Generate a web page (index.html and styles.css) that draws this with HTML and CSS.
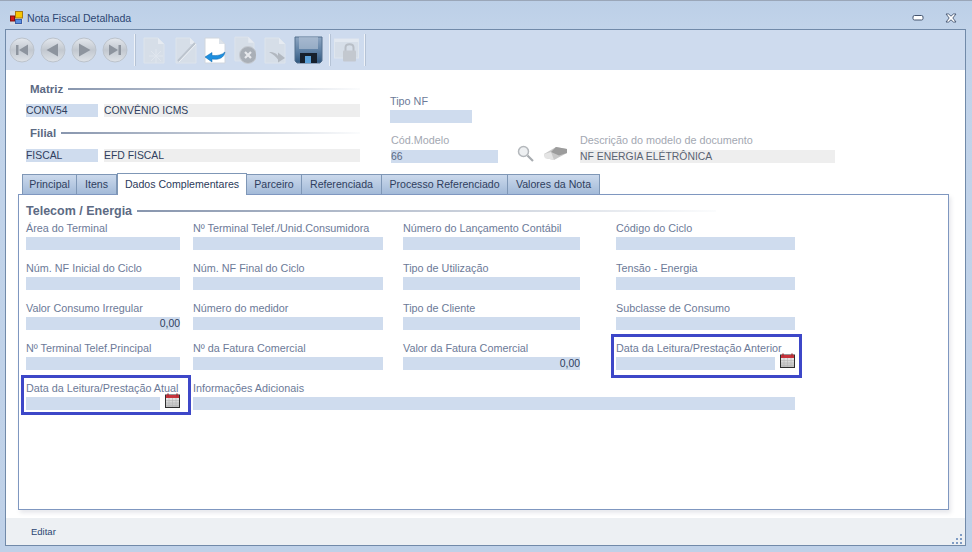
FILE: index.html
```html
<!DOCTYPE html>
<html lang="pt-BR">
<head>
<meta charset="utf-8">
<title>Nota Fiscal Detalhada</title>
<link rel="stylesheet" href="styles.css">
</head>
<body>
<svg class="defs" width="0" height="0" aria-hidden="true">
  <defs>
    <linearGradient id="ball" x1="0" y1="0" x2="0" y2="1"><stop offset="0" stop-color="#e4e8ee"/><stop offset=".5" stop-color="#c2c8d0"/><stop offset="1" stop-color="#dfe3e8"/></linearGradient>
    <linearGradient id="floppy" x1="0" y1="0" x2="0" y2="1"><stop offset="0" stop-color="#8ea6c2"/><stop offset=".55" stop-color="#5d7fa3"/><stop offset="1" stop-color="#2f577f"/></linearGradient>
    <linearGradient id="cal" x1="0" y1="0" x2="0" y2="1"><stop offset="0" stop-color="#f5f5f5"/><stop offset="1" stop-color="#bdbdbd"/></linearGradient>
    <symbol id="doc" viewBox="0 0 22 27">
      <path d="M1 1H15L21 7V26H1Z" fill="#d6dee8" stroke="#dde4ec"/>
      <path d="M15 1V7H21Z" fill="#e6ebf2"/>
    </symbol>
    <symbol id="calendar" viewBox="0 0 15 15">
      <rect x="0.5" y="2" width="14" height="12.5" fill="url(#cal)" stroke="#2e2e2e"/>
      <rect x="1" y="2" width="13" height="3" fill="#c8343c"/>
      <path d="M3 0.5V3.500M12 0.5V3.500" stroke="#a83038" stroke-width="1.4"/>
      <path d="M1 7.500H14M1 10H14M1 12.500H14M4 5V14M7.500 5V14M11 5V14" stroke="#b5b5b5" stroke-width=".6"/>
    </symbol>
  </defs>
</svg>

<div class="window">
  <header class="titlebar">
    <svg class="app-icon" width="13" height="14" viewBox="0 0 13 14">
      <rect x="0" y="0" width="13" height="14" fill="#d3dbe5"/>
      <rect x="5.5" y="0.5" width="7" height="6.5" fill="#f7c600" stroke="#a87a10"/>
      <rect x="0.5" y="5" width="4" height="5" fill="#d81818" stroke="#801010"/>
      <rect x="5.5" y="8.5" width="6" height="4" fill="#5b8fe0" stroke="#3a5ea8"/>
    </svg>
    <span class="title">Nota Fiscal Detalhada</span>
    <div class="win-buttons">
      <svg width="12" height="6" viewBox="0 0 12 6"><rect x="1" y="0.5" width="10" height="4.5" rx="1.5" fill="#fff" stroke="#44546e"/></svg>
      <svg width="12" height="10" viewBox="0 0 12 10"><path d="M1 1H3.6L6 3.2 8.4 1H11L7.8 5 11 9H8.4L6 6.8 3.6 9H1L4.2 5Z" fill="#fff" stroke="#44546e" stroke-width=".9"/></svg>
    </div>
  </header>

  <div class="frame">
    <div class="toolbar">
      <svg class="tool ball" width="26" height="26" viewBox="0 0 26 26"><circle cx="13" cy="13" r="12" fill="url(#ball)" stroke="#bcc3cc"/><path d="M7 8H9.5V18H7ZM19 7.5V18.5L10 13Z" fill="#8d949e"/></svg>
      <svg class="tool ball" width="26" height="26" viewBox="0 0 26 26"><circle cx="13" cy="13" r="12" fill="url(#ball)" stroke="#bcc3cc"/><path d="M18 6.5V19.500L6.500 13Z" fill="#8d949e"/></svg>
      <svg class="tool ball" width="26" height="26" viewBox="0 0 26 26"><circle cx="13" cy="13" r="12" fill="url(#ball)" stroke="#bcc3cc"/><path d="M8 6.500V19.500L19.500 13Z" fill="#8d949e"/></svg>
      <svg class="tool ball" width="26" height="26" viewBox="0 0 26 26"><circle cx="13" cy="13" r="12" fill="url(#ball)" stroke="#bcc3cc"/><path d="M16.500 8H19V18H16.500ZM7 7.500V18.500L16 13Z" fill="#8d949e"/></svg>
      <span class="sep sep-a"></span>
      <svg class="tool doc1" width="22" height="27"><use href="#doc"/><path d="M8 14L18 24M18 14L8 24M13 12V26M6 19H20" stroke="#e0e6ee" stroke-width="1"/></svg>
      <svg class="tool doc2" width="22" height="27"><use href="#doc"/><path d="M3 24L20 6" stroke="#bcc4ce" stroke-width="2"/><path d="M4 25L21 7" stroke="#eef2f6"/></svg>
      <svg class="tool doc3" width="22" height="27" viewBox="0 0 22 27"><path d="M1 1H15L21 7V26H1Z" fill="#fff" stroke="#d0d6de"/><path d="M15 1V7H21Z" fill="#dde3ea"/><path d="M21 15C20 21 15 23 8 22V25L1 20 8 15.500V18.500C13 19 18 18 21 15Z" fill="#1e8fdf" stroke="#1269ad" stroke-width=".5"/></svg>
      <svg class="tool doc4" width="22" height="28" viewBox="0 0 22 28"><use href="#doc" width="21" height="26"/><circle cx="14" cy="19" r="8.500" fill="#a9afb7" stroke="#c6cbd2"/><path d="M11 16L17 22M17 16L11 22" stroke="#e6e8ec" stroke-width="2.200"/></svg>
      <svg class="tool doc5" width="22" height="27"><use href="#doc"/><path d="M5 15C10 15 13 17 14 19V15.500L21 21 14 25.500V22.500C12 20 9 17 5 15Z" fill="#b2b8c0"/></svg>
      <svg class="tool save" width="29" height="28" viewBox="0 0 29 28"><path d="M1 1H28V25L26 27H3L1 25Z" fill="url(#floppy)" stroke="#54708e"/><rect x="5" y="1" width="19" height="12" fill="#b7c7d8" opacity=".6"/><rect x="6" y="17" width="17" height="10" fill="#16202c"/><rect x="11" y="20" width="6" height="7" fill="#5aa0d8"/></svg>
      <span class="sep sep-b"></span>
      <svg class="tool lock" width="25" height="28" viewBox="0 0 25 28"><rect x="0.500" y="3" width="24" height="19" fill="#d6dee8" stroke="#dfe6ee"/><rect x="0.500" y="3" width="24" height="3" fill="#e2e8f0"/><path d="M11.500 15V11.500C11.500 7 19.500 7 19.500 11.500V15" fill="none" stroke="#b8bec6" stroke-width="2"/><rect x="9" y="14.500" width="13" height="11" rx="1" fill="#c3c8cf"/></svg>
      <span class="sep sep-c"></span>
    </div>

    <main class="content">
      <section class="head">
        <div class="head-left">
          <div class="group-title title-matriz"><b>Matriz</b><i></i></div>
          <div class="pair">
            <span class="box code">CONV54</span>
            <span class="box desc">CONVÊNIO ICMS</span>
          </div>
          <div class="group-title title-filial"><b>Filial</b><i></i></div>
          <div class="pair">
            <span class="box code">FISCAL</span>
            <span class="box desc">EFD FISCAL</span>
          </div>
        </div>
        <div class="head-right">
          <div class="tipo">
            <label class="lbl">Tipo NF</label>
            <span class="box tipo-box"></span>
          </div>
          <div class="modelo">
            <div class="cod">
              <label class="lbl muted">Cód.Modelo</label>
              <span class="box cod-box">66</span>
            </div>
            <svg class="search" width="17" height="17" viewBox="0 0 17 17"><circle cx="6.500" cy="6.500" r="5" fill="#eef0f2" stroke="#b4b8bc" stroke-width="1.500"/><path d="M10.500 10.500L16 16" stroke="#a8acb0" stroke-width="2.200"/></svg>
            <svg class="eraser" width="25" height="15" viewBox="0 0 25 15"><path d="M1 8L13 1 24 3V7L11 14 2 12Z" fill="#c8c8c8"/><path d="M13 1L24 3V7L16 9.500 8 6Z" fill="#9c9c9c"/><path d="M1 8L8 6 11 14 2 12Z" fill="#e4e4e4"/></svg>
            <div class="descr">
              <label class="lbl muted">Descrição do modelo de documento</label>
              <span class="box descr-box">NF ENERGIA ELÉTRÔNICA</span>
            </div>
          </div>
        </div>
      </section>

      <nav class="tabs">
        <span class="tab t1">Principal</span>
        <span class="tab t2">Itens</span>
        <span class="tab active t3">Dados Complementares</span>
        <span class="tab t4">Parceiro</span>
        <span class="tab t5">Referenciada</span>
        <span class="tab t6">Processo Referenciado</span>
        <span class="tab t7">Valores da Nota</span>
      </nav>

      <section class="panel">
        <div class="group-title title-telecom"><b>Telecom / Energia</b><i></i></div>
        <div class="grid">
          <div class="field f1"><label class="lbl">Área do Terminal</label><span class="box"></span></div>
          <div class="field f2"><label class="lbl">Nº Terminal Telef./Unid.Consumidora</label><span class="box"></span></div>
          <div class="field f3"><label class="lbl">Número do Lançamento Contábil</label><span class="box"></span></div>
          <div class="field f4"><label class="lbl">Código do Ciclo</label><span class="box"></span></div>

          <div class="field f1"><label class="lbl">Núm. NF Inicial do Ciclo</label><span class="box"></span></div>
          <div class="field f2"><label class="lbl">Núm. NF Final do Ciclo</label><span class="box"></span></div>
          <div class="field f3"><label class="lbl">Tipo de Utilização</label><span class="box"></span></div>
          <div class="field f4"><label class="lbl">Tensão - Energia</label><span class="box"></span></div>

          <div class="field f1"><label class="lbl">Valor Consumo Irregular</label><span class="box num">0,00</span></div>
          <div class="field f2"><label class="lbl">Número do medidor</label><span class="box"></span></div>
          <div class="field f3"><label class="lbl">Tipo de Cliente</label><span class="box"></span></div>
          <div class="field f4"><label class="lbl">Subclasse de Consumo</label><span class="box"></span></div>

          <div class="field f1"><label class="lbl">Nº Terminal Telef.Principal</label><span class="box"></span></div>
          <div class="field f2"><label class="lbl">Nº da Fatura Comercial</label><span class="box"></span></div>
          <div class="field f3"><label class="lbl">Valor da Fatura Comercial</label><span class="box num">0,00</span></div>
          <div class="field f4">
            <label class="lbl">Data da Leitura/Prestação Anterior</label>
            <div class="date"><span class="box date-anterior"></span><svg class="cal" width="15" height="15"><use href="#calendar"/></svg></div>
            <span class="mark mark-anterior"></span>
          </div>

          <div class="field f1">
            <label class="lbl">Data da Leitura/Prestação Atual</label>
            <div class="date"><span class="box date-atual"></span><svg class="cal" width="15" height="15"><use href="#calendar"/></svg></div>
            <span class="mark mark-atual"></span>
          </div>
          <div class="field f-wide"><label class="lbl">Informações Adicionais</label><span class="box"></span></div>
        </div>
      </section>

      <footer class="status">
        <span class="status-text">Editar</span>
        <svg class="grip" width="10" height="10" viewBox="0 0 10 10"><path d="M8 0h2v2H8zM4 4h2v2H4zM8 4h2v2H8zM0 8h2v2H0zM4 8h2v2H4zM8 8h2v2H8z" fill="#7f9cc4"/></svg>
      </footer>
    </main>
  </div>
</div>
</body>
</html>
```
FILE: styles.css
```css
* { box-sizing: border-box; }
html, body { margin: 0; padding: 0; }
body {
  width: 972px;
  height: 552px;
  overflow: hidden;
  font-family: "Liberation Sans", Arial, sans-serif;
  font-size: 10.8px;
  color: #36466a;
  background: #bfd1e8;
}
.defs { position: absolute; }
.window {
  width: 972px;
  height: 552px;
  border-top: 1px solid #9aa6b8;
  background: linear-gradient(#bccfe7, #c2d4ea 30px, #bfd1e8);
  display: flex;
  flex-direction: column;
  padding: 0 6px 6px 5px;
}

/* title bar */
.titlebar {
  height: 28px;
  flex: none;
  display: flex;
  align-items: center;
  padding: 6px 0 0 5px;
}
.app-icon { flex: none; }
.title { margin-left: 4px; font-size: 10.6px; color: #2c4672; }
.win-buttons {
  margin-left: auto;
  display: flex;
  align-items: center;
  gap: 21px;
  padding-right: 9px;
}

/* frame */
.frame {
  flex: 1;
  display: flex;
  flex-direction: column;
  border: 1px solid #718aa9;
  min-height: 0;
}
.toolbar {
  height: 40px;
  flex: none;
  display: flex;
  align-items: center;
  background: #cedbee;
  padding-left: 3px;
}
.tool { flex: none; }
.ball { margin-right: 5px; }
.sep {
  flex: none;
  width: 2px;
  height: 32px;
  background: #eef2f8;
  border-right: 1px solid #b5c3d6;
}
.sep-a { margin: 0 7px 0 1px; }
.doc1 { margin-right: 10px; }
.doc2 { margin-right: 7px; }
.doc3, .doc4, .doc5 { margin-right: 8px; }
.save { margin: 0 6px 0 0; }
.sep-b { margin-right: 3px; }
.lock { margin-right: 5px; }

.content {
  flex: 1;
  position: relative;
  display: flex;
  flex-direction: column;
  background: #fff;
  min-height: 0;
  padding-left: 12px;
}

/* header */
.head {
  height: 103px;
  flex: none;
  display: flex;
  padding: 12px 0 0 8px;
}
.head-left { width: 334px; flex: none; }
.head-right { margin-left: 30px; padding-top: 12px; flex: 1; }
.group-title {
  display: flex;
  align-items: center;
  height: 14px;
}
.group-title b { color: #5c6a83; font-weight: bold; font-size: 11.5px; }
.group-title i {
  flex: 1;
  height: 2px;
  margin-left: 5px;
  background: linear-gradient(90deg, #8896ae, #fbfcfd);
}
.title-matriz { padding-left: 4px; margin-bottom: 8px; }
.title-filial { padding-left: 4px; margin: 9px 0 9px; }
.pair { display: flex; gap: 6px; }
.box {
  display: block;
  height: 13px;
  line-height: 13px;
  background: #cfdcee;
  color: #2f3e5e;
  white-space: nowrap;
  font-size: 10.4px;
}
.code { width: 72px; }
.desc { flex: 1; background: #eeeeee; }
.lbl { display: block; height: 14px; line-height: 14px; color: #6c7a98; white-space: nowrap; }
.muted { color: #a3a8b2; }
.tipo-box { width: 82px; margin-top: 2px; }
.tipo { margin-bottom: 10px; }
.modelo { display: flex; align-items: flex-end; }
.cod { width: 107px; margin-left: 1px; flex: none; }
.cod-box { margin-top: 3px; color: #5a6a86; }
.search { margin: 0 0 1px 19px; flex: none; }
.eraser { margin: 0 0 2px 9px; flex: none; }
.descr { margin-left: 12px; width: 255px; flex: none; }
.descr-box { background: #eeeeee; margin-top: 3px; color: #5a6372; }

/* tabs */
.tabs {
  flex: none;
  display: flex;
  height: 21px;
  padding-left: 4px;
  position: relative;
  z-index: 1;
  align-items: flex-end;
}
.tab {
  height: 20px;
  line-height: 19px;
  text-align: center;
  border: 1px solid #7f97b6;
  border-bottom: 0;
  border-left-width: 0;
  background: linear-gradient(#cbd9ec, #a3bad8);
  color: #2f3e5e;
  font-size: 10.6px;
}
.tab:first-child { border-left-width: 1px; }
.t1 { width: 55px; }
.t2 { width: 40px; }
.t3 { width: 130px; }
.t4 { width: 55px; }
.t5 { width: 80px; }
.t6 { width: 126px; }
.t7 { width: 92px; }
.tab.active {
  height: 22px;
  line-height: 21px;
  margin-bottom: -1px;
  background: #fff;
  border-left-width: 1px;
  color: #2b3a5a;
}

/* panel */
.panel {
  width: 931px;
  height: 316px;
  flex: none;
  border: 1px solid #7f97c0;
  background: #fff;
  box-shadow: 2px 3px 4px rgba(120, 130, 150, .18);
  padding: 9px 7px 0 7px;
}
.title-telecom { margin-bottom: 3px; width: 690px; }
.title-telecom b { font-size: 12.5px; }
.grid {
  display: grid;
  grid-template-columns: 167px 210px 213px 179px;
  grid-auto-rows: 29px;
  row-gap: 11px;
  margin-top: 3px;
}
.field { position: relative; }
.field .lbl { margin-bottom: 2px; }
.f1 { width: 154px; }
.f2 { width: 190px; }
.f3 { width: 177px; }
.f4 { width: 179px; }
.f-wide { grid-column: 2 / span 3; }
.num { text-align: right; }
.date { display: flex; align-items: flex-end; justify-content: space-between; height: 13px; }
.date-anterior { width: 159px; }
.date-atual { width: 134px; }
.cal { flex: none; margin-bottom: 2px; }

/* highlight annotations */
.mark {
  position: absolute;
  border: 3px solid #3d47c8;
  pointer-events: none;
}
.mark-anterior { left: -5px; top: -7px; width: 191px; height: 44px; }
.mark-atual { left: -5px; top: -6px; width: 170px; height: 40px; }

/* status bar */
.status {
  position: absolute;
  left: 0;
  right: 0;
  bottom: 0;
  height: 27px;
  background: #edf0f3;
  display: flex;
  align-items: center;
  justify-content: space-between;
  padding: 0 3px 0 25px;
}
.status-text { font-size: 9.5px; color: #2c4672; }
.grip { align-self: flex-end; margin-bottom: 1px; }
```
